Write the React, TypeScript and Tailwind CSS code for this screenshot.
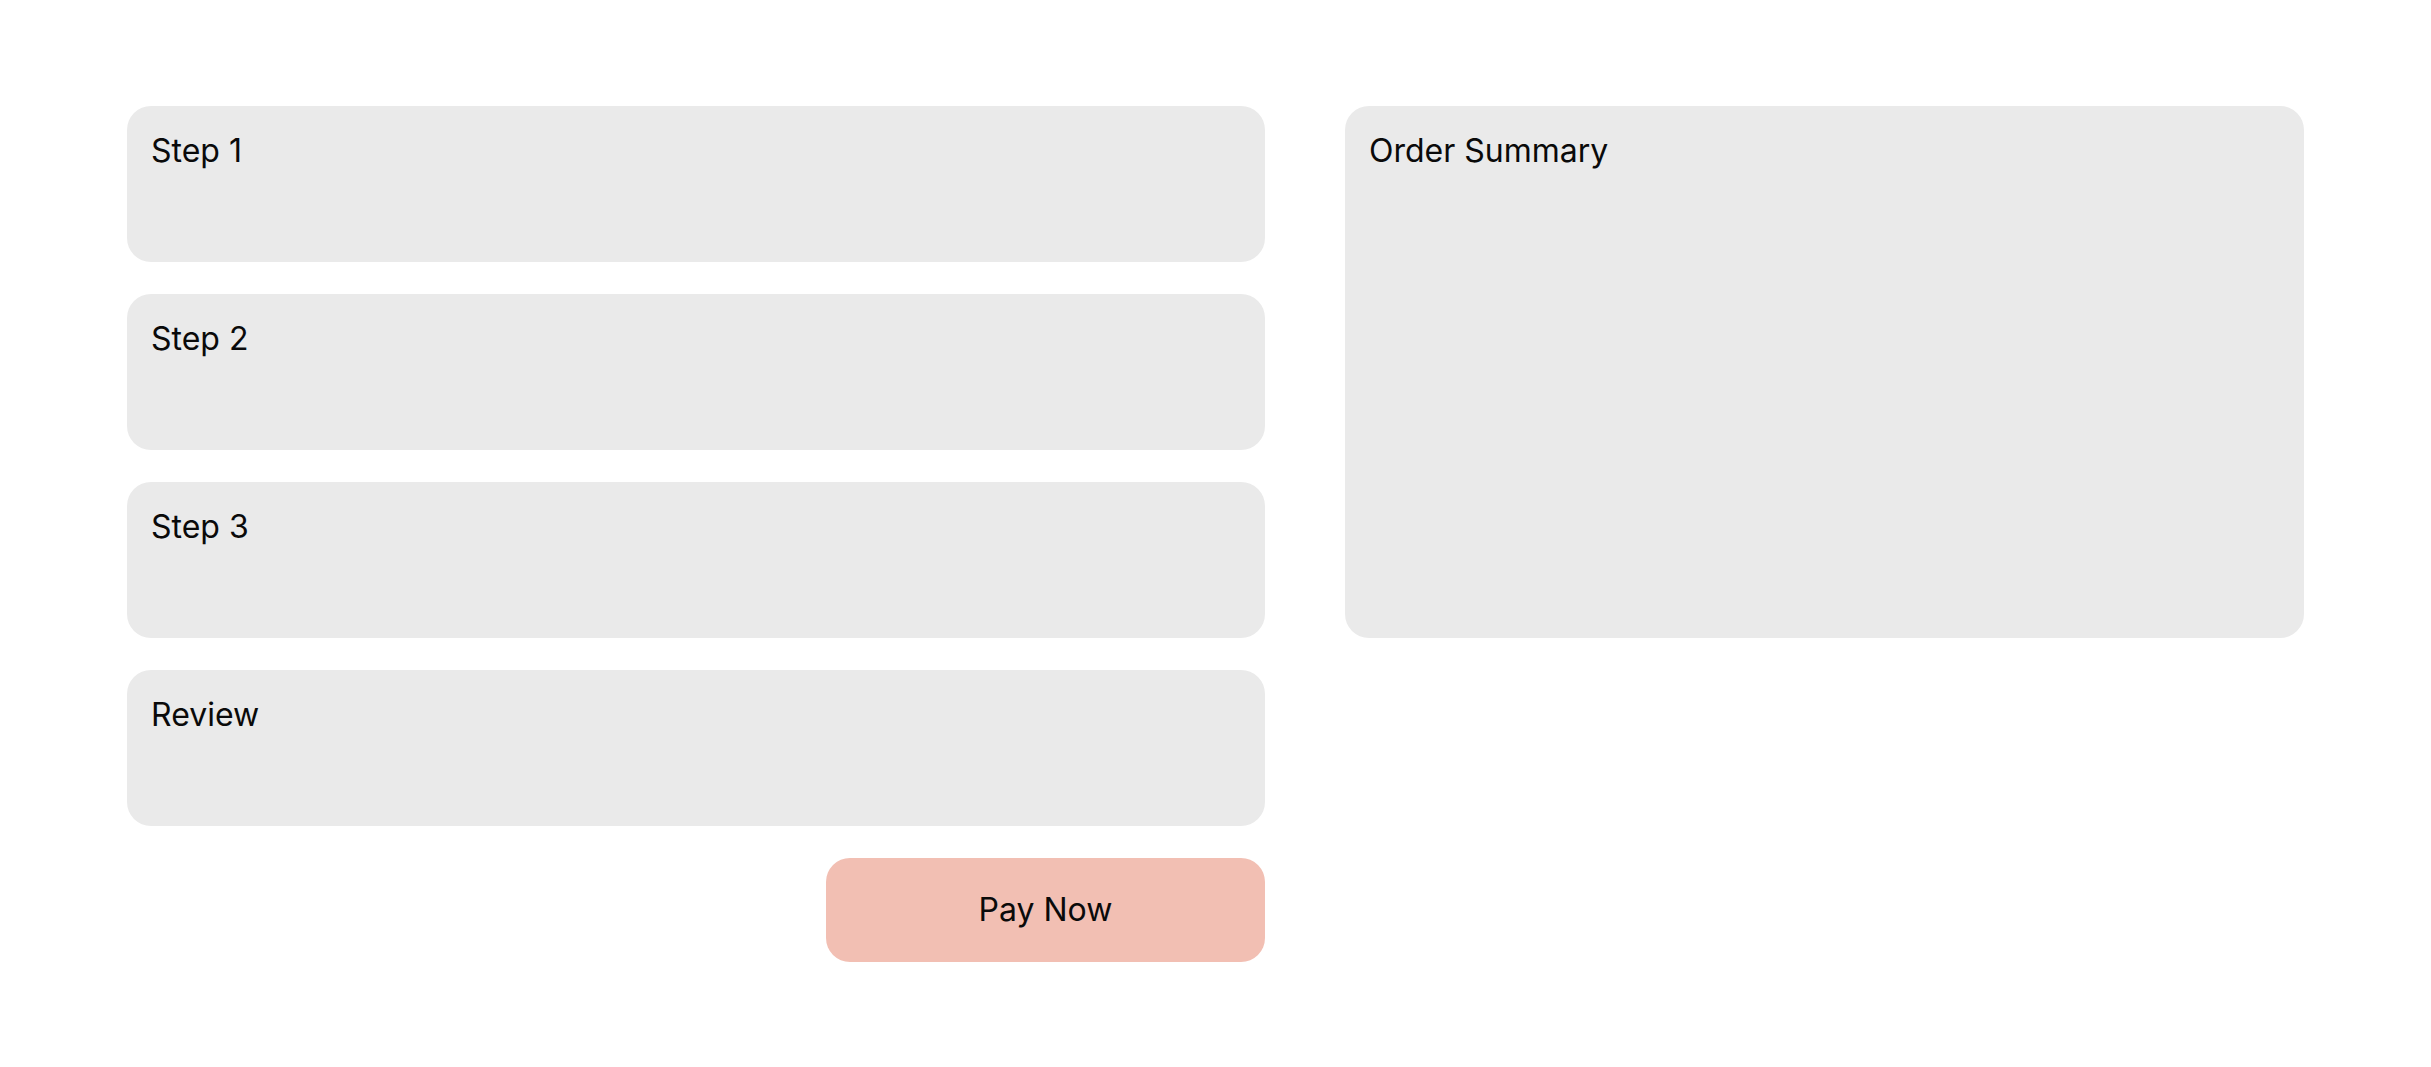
const steps = ['Step 1', 'Step 2', 'Step 3', 'Review'];

function Panel({ title, className = '' }: { title: string; className?: string }) {
  return (
    <section className={`rounded-[24px] bg-[#eaeaea] p-6 ${className}`}>
      <h2 className="text-[32px] leading-[1.3] font-normal text-[#0a0a0a]">{title}</h2>
    </section>
  );
}

export default function App() {
  return (
    <div className="min-h-screen bg-white px-[127px] pt-[106px] font-['Inter',sans-serif]">
      <div className="grid grid-cols-[1138fr_959fr] gap-20 items-start">
        {/* Checkout steps */}
        <div className="flex flex-col gap-8">
          {steps.map((s) => (
            <Panel key={s} title={s} className="h-[156px]" />
          ))}
          <div className="flex justify-end">
            <button className="h-[104px] w-[439px] rounded-[24px] bg-[#f2bfb3] text-[32px] text-[#0a0a0a]">
              Pay Now
            </button>
          </div>
        </div>

        {/* Summary */}
        <Panel title="Order Summary" className="h-[532px]" />
      </div>
    </div>
  );
}
